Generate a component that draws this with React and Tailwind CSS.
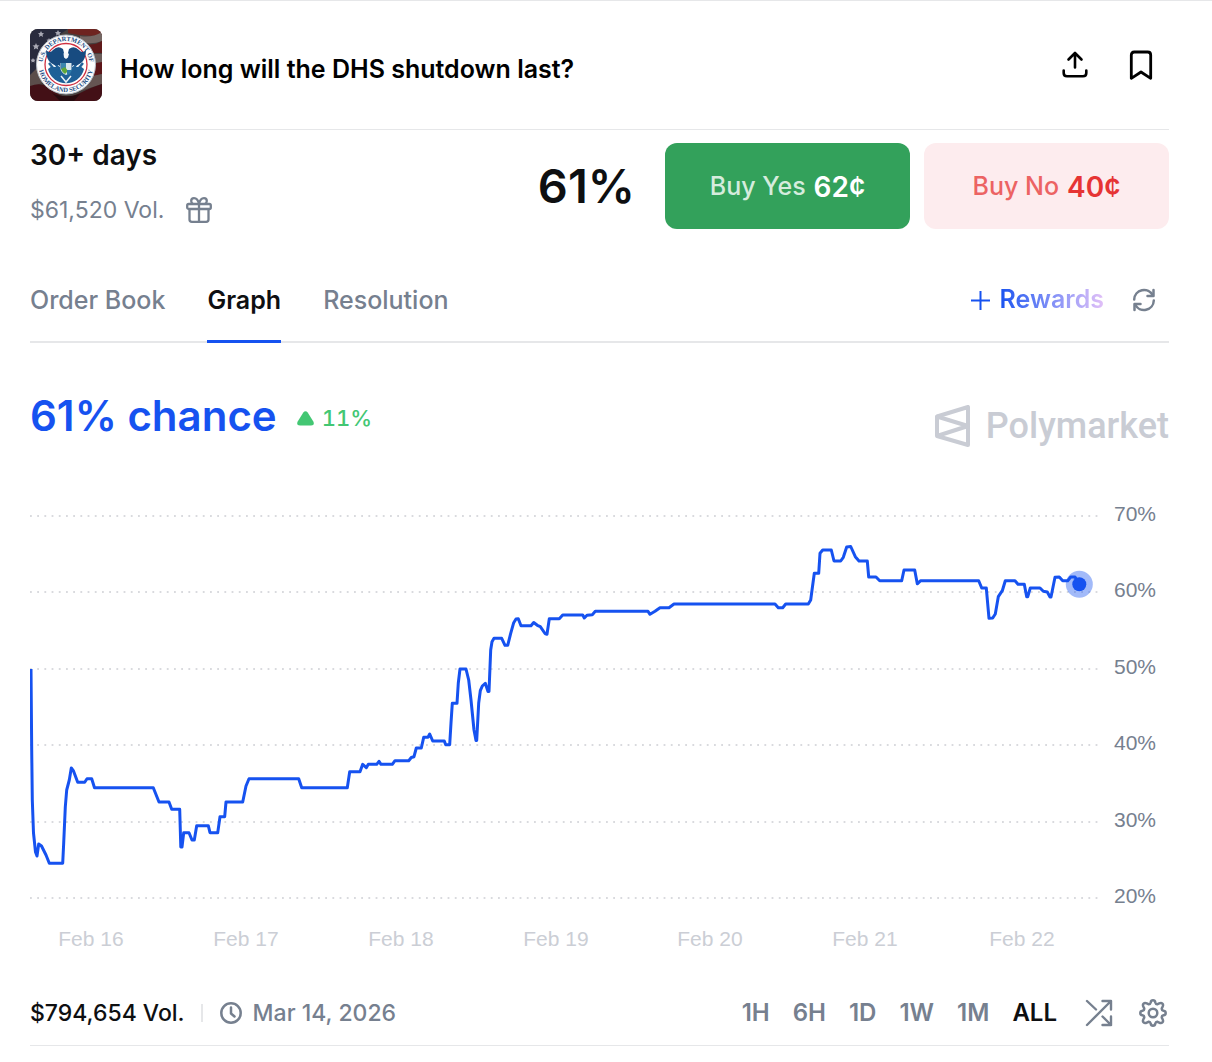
import { useState } from 'react';

const TABS = ['Order Book', 'Graph', 'Resolution'];
const RANGES = ['1H', '6H', '1D', '1W', '1M', 'ALL'];

// Grid rows of the price chart, top to bottom.
const GRID = [
  { label: '70%', y: 516 },
  { label: '60%', y: 592 },
  { label: '50%', y: 669 },
  { label: '40%', y: 745 },
  { label: '30%', y: 822 },
  { label: '20%', y: 898 },
];

const DATES = [
  { label: 'Feb 16', x: 91 },
  { label: 'Feb 17', x: 246 },
  { label: 'Feb 18', x: 401 },
  { label: 'Feb 19', x: 556 },
  { label: 'Feb 20', x: 710 },
  { label: 'Feb 21', x: 865 },
  { label: 'Feb 22', x: 1022 },
];

const PRICE_LINE = `
  31,669 31.7,750 32.3,800 33.5,833 35.5,852 37,856 38.7,844 41.5,846 46,855 49.3,863.3 62.7,863.3
  63.7,843 65.3,807 66.7,790 69.3,780 71.3,768 73.5,771 77.7,782.3 84.7,782.3 87,778.7 91.7,778.7
  94.5,787.7 153.3,787.7 159,802 169,802 171.7,809.3 179.7,809.3 180.8,847 182,847 183.7,832.7
  189,832.7 192,840 194.3,840 196.7,825.7 208.3,825.7 210,832.7 217.7,832.7 220,816.7 224.7,816.7
  226,802 242.7,802 246,786 249,778.7 298.7,778.7 301.7,787.7 347.3,787.7 349.7,771.7 360,771.7
  362.7,764.3 366.3,767.7 368.3,764.3 376.7,764.3 379,761.3 381,764.3 392.3,764.3 395,760.7
  408.7,760.7 411.3,757.5 414,756.7 416.3,748 421.3,748 423.7,737.3 428,737.3 429.7,734 432.7,741
  444.3,741 445.7,744.7 449.7,744.7 451,723 452.3,703.3 457,703.3 458.3,683 460,669 466,669
  468.7,680 471,700 474,730 476,740.5 476.7,740.5 478.7,703 480.3,690.7 482.3,686 485.3,683.3
  488,691.5 489,691.5 490.7,650 492,641.7 494,638.3 501.7,638.3 505,645.3 507.7,645.3 510.7,633.3
  513.7,622.7 516,619 518.3,618.7 521,625.7 531,625.7 533.7,622.5 537.3,625.3 540.3,626.7 545,633.5
  547,634.3 549.3,618.7 559.3,618.7 562.7,615 582.7,615 584.3,618 587,615.3 592.3,614.7 595.3,611.3
  648,611.3 650,614.3 655,611.3 660,607.7 669,607.7 674,604 775,604 778.3,607.7 782.7,607.7
  785.7,604 808.3,604 810.7,600 812.3,588 814.3,573.3 818.7,573.3 820,553.3 822.7,550 831.3,550
  834,561 840.7,561 843.3,557.3 846.7,547 850.7,546.5 855.3,556.7 859,561 867.3,561 868.7,577
  876,577 879.7,580.7 901.7,580.7 904,570 914.7,570 917.3,583.8 920.7,580.7 978.7,580.7 981.7,588
  986.3,588 989,618.3 992.7,618 995.3,614 998.3,596.7 1002.3,590.7 1005.3,580.7 1015,580.7
  1018,584.3 1024.3,584.3 1026.7,596.7 1027.7,596.7 1030.3,588 1040,588 1043.3,591.3 1047.3,592
  1050,597 1051,597 1055,577.3 1059.3,577 1062.7,580.7 1067.7,580.7 1070.7,577 1075,577 1079.3,584.3
`;

function SealAvatar() {
  return (
    <svg viewBox="0 0 72 72" className="size-[72px] shrink-0 rounded-lg" role="img" aria-label="Department of Homeland Security">
      <defs>
        <path id="seal-top" d="M13.300 41.600A23.500 23.500 0 1 1 58.700 41.600" />
        <path id="seal-bottom" d="M8.400 35.500A27.600 27.600 0 0 0 63.600 35.500" />
      </defs>
      <rect width="72" height="72" fill="#46403f" />
      <path d="M38 0H72V6Q54 8 38 4Z" fill="#6e2420" />
      <path d="M50 7Q62 9 72 3V12Q62 16 50 13Z" fill="#756763" />
      <path d="M54 15Q64 17 72 12V24H58Z" fill="#5f1a1a" />
      <path d="M60 25H72V34H62Z" fill="#6b5d5a" />
      <path d="M60 35L72 33V45L60 48Z" fill="#5c1518" />
      <path d="M58 48L72 45V55L50 62Z" fill="#655552" />
      <path d="M0 0H38Q24 8 14 24L6 46H0Z" fill="#292b3d" />
      <path d="M0 46L8 38 12 54 0 58Z" fill="#5b4d4a" />
      <path d="M0 57Q14 52 24 62T50 64Q62 58 72 55V72H0Z" fill="#431016" />
      <path d="M22 64Q34 70 50 65L44 72H30Z" fill="#260b0f" />
      <g fill="#a9a9b4">
        <path d="M11 2l1 2 2 .2-1.500 1.500.5 2.200-2-1.200-2 1.200.5-2.200L8 4.200l2-.2z" />
        <path d="M28 1l1 2 2 .2-1.500 1.500.5 2-2-1.200-2 1.200.5-2L25 3.200l2-.2z" />
        <path d="M6 14l1 2.200 2.500.2-1.800 1.600.5 2.500L6 19.200l-2.200 1.300.5-2.500-1.800-1.600 2.500-.2z" />
        <path d="M19 9l.8 1.500 1.700.2-1.200 1.200.3 1.700-1.600-.8-1.600.8.3-1.700-1.200-1.200 1.700-.2z" />
        <path d="M3 29l.8 1.500 1.700.2-1.200 1.200.3 1.700L3 32.800l-1.600.8.3-1.700L.5 30.700l1.700-.2z" />
      </g>
      <circle cx="36" cy="35.500" r="29.500" fill="#fdfdfd" stroke="#b8bfc8" strokeWidth="1" />
      <g fill="#1d4f86" fontFamily="Liberation Serif, serif" fontWeight="700" fontSize="6.500">
        <text textAnchor="middle">
          <textPath href="#seal-top" startOffset="50%">U.S. DEPARTMENT OF</textPath>
        </text>
        <text textAnchor="middle">
          <textPath href="#seal-bottom" startOffset="50%">HOMELAND SECURITY</textPath>
        </text>
      </g>
      <circle cx="36" cy="35.500" r="21" fill="#fff" stroke="#cf3040" strokeWidth="1.300" />
      <path d="M18 40A18.500 18.500 0 0 0 54 40L45 33H27Z" fill="#1f6097" />
      <path d="M22 29L50 29 53 38 19 38Z" fill="#eef4f8" />
      <path d="M19 34l9 11M22 31l9 11M53 34l-9 11M50 31l-9 11" stroke="#1f6097" strokeWidth="2.400" />
      <path
        d="M16 21Q20 25 23 21Q28 16 33 20L34 24H38L39 20Q44 16 49 21Q52 25 56 21Q56 30 51 34Q47 37 43 36L40 42H32L29 36Q25 37 21 34Q16 30 16 21Z"
        fill="#174b80"
      />
      <path d="M33.500 24.500Q36 22 39 25L38 28.500 36 30 34 28.500Z" fill="#f4f7f9" />
      <path d="M30.500 34h11v6q-1 4-5.500 6-4.500-2-5.500-6z" fill="#d9e8ee" />
      <path d="M31 34h5v6h-5z" fill="#3b86ae" />
      <path d="M31 40l4-2 3 4-3 3q-3-2-4-5z" fill="#5fa63a" />
      <path d="M37 41h5l-2 4-3 1z" fill="#2d79a8" />
      <path d="M31 47l5 6 5-6" fill="none" stroke="#e9f2f7" strokeWidth="1.500" />
    </svg>
  );
}

function UploadIcon() {
  return (
    <svg viewBox="0 0 30 30" className="size-[30px]" fill="none" stroke="#000" strokeWidth="2.600" strokeLinecap="round" strokeLinejoin="round">
      <path d="M15 17.500V3M8.500 9.500L15 3L21.500 9.500" />
      <path d="M3.700 20.500V23Q3.700 26.300 7 26.300H23Q26.300 26.300 26.300 23V20.500" />
    </svg>
  );
}

function BookmarkIcon() {
  return (
    <svg viewBox="0 0 30 30" className="size-[30px]" fill="none" stroke="#000" strokeWidth="2.800" strokeLinejoin="round">
      <path d="M5.300 28.300V5Q5.300 2 8.300 2H21.700Q24.700 2 24.700 5V28.300L15 22Z" />
    </svg>
  );
}

function GiftIcon() {
  return (
    <svg viewBox="0 0 26 26" className="size-[26px]" fill="none" stroke="currentColor" strokeWidth="2.300" strokeLinejoin="round">
      <rect x="1.200" y="7" width="23.600" height="5" rx="1.500" />
      <path d="M3.500 12V22.500Q3.500 24.800 5.800 24.800H20.200Q22.500 24.800 22.500 22.500V12M13 7V24.800" />
      <path d="M13 7Q11.800 1.200 8 1.200Q5.200 1.200 5.200 4Q5.200 6 7 7M13 7Q14.200 1.200 18 1.200Q20.800 1.200 20.800 4Q20.800 6 19 7" />
    </svg>
  );
}

function RefreshIcon() {
  return (
    <svg viewBox="0 0 24 24" className="size-6" fill="none" stroke="currentColor" strokeWidth="2.500" strokeLinecap="round" strokeLinejoin="round">
      <path d="M2.200 11.500A9.800 9.800 0 0 1 20.800 7.500M21.800 12.500A9.800 9.800 0 0 1 3.200 16.500" />
      <path d="M21.500 2V8H15.500M2.500 22V16H8.500" />
    </svg>
  );
}

function PolymarketMark() {
  return (
    <svg viewBox="0 0 36 42" className="h-[42px] w-9" fill="none" stroke="currentColor" strokeWidth="4" strokeLinejoin="round">
      <path d="M3 11.500L34 2V40L3 31Z" />
      <path d="M3 11.500L34 21L3 31" />
    </svg>
  );
}

function ClockIcon() {
  return (
    <svg viewBox="0 0 24 24" className="size-6" fill="none" stroke="currentColor" strokeWidth="2.500" strokeLinecap="round" strokeLinejoin="round">
      <circle cx="12" cy="12" r="9.700" />
      <path d="M12 6.500V12.500L15.500 15.500" />
    </svg>
  );
}

function ShuffleIcon() {
  return (
    <svg viewBox="0 0 28 28" className="size-7" fill="none" stroke="currentColor" strokeWidth="2.400" strokeLinecap="round" strokeLinejoin="round">
      <path d="M2 26L26 2M17.500 2H26V10.500M2 2L11 10.500M17.500 17.500L26 26M26 17.500V26H17.500" />
    </svg>
  );
}

function GearIcon() {
  return (
    <svg viewBox="0 0 28 28" className="size-7" fill="none" stroke="currentColor" strokeWidth="2.500" strokeLinejoin="round">
      <circle cx="14" cy="14" r="4.300" />
      <path d="M11.700 3.500Q12 1.300 14 1.300T16.300 3.500Q16.800 5.500 18.600 5.200L20.200 4.400Q22.200 3.400 23.400 4.600T23.600 7.800L22.800 9.400Q22.500 11.200 24.500 11.700Q26.700 12 26.700 14T24.500 16.300Q22.500 16.800 22.800 18.600L23.600 20.200Q24.600 22.200 23.400 23.400T20.200 23.600L18.600 22.800Q16.800 22.500 16.300 24.500Q16 26.700 14 26.700T11.700 24.500Q11.200 22.500 9.400 22.800L7.800 23.600Q5.800 24.600 4.600 23.400T4.400 20.200L5.200 18.600Q5.500 16.800 3.500 16.300Q1.300 16 1.300 14T3.500 11.700Q5.500 11.200 5.200 9.400L4.400 7.800Q3.400 5.800 4.600 4.600T7.800 4.400L9.400 5.200Q11.200 5.500 11.700 3.500Z" />
    </svg>
  );
}

function PriceChart() {
  return (
    <svg viewBox="30 490 1139 470" className="block h-auto w-full" role="img" aria-label="Chance over time">
      {GRID.map((row) => (
        <g key={row.label}>
          <line x1="30" x2="1098" y1={row.y} y2={row.y} stroke="#d9dade" strokeWidth="1.800" strokeDasharray="1.800 5.400" />
          <text x="1114" y={row.y + 5} fill="#76808f" fontFamily="Liberation Sans, Arial, sans-serif" fontSize="21">
            {row.label}
          </text>
        </g>
      ))}
      {DATES.map((d) => (
        <text
          key={d.label}
          x={d.x}
          y="946"
          textAnchor="middle"
          fill="#cbced5"
          fontFamily="Liberation Sans, Arial, sans-serif"
          fontSize="21"
        >
          {d.label}
        </text>
      ))}
      <polyline points={PRICE_LINE} fill="none" stroke="#1652f0" strokeWidth="3" strokeLinejoin="round" strokeLinecap="butt" />
      <circle cx="1079.300" cy="584.300" r="13.500" fill="#1652f0" fillOpacity="0.4" />
      <circle cx="1079.300" cy="584.300" r="7" fill="#1652f0" />
    </svg>
  );
}

export default function App() {
  const [tab, setTab] = useState('Graph');
  const [range, setRange] = useState('ALL');

  return (
    <main className="border-t border-[#e6e7e9] bg-white pr-[43px] pl-[30px] font-['Inter',sans-serif] text-[#0e0f11]">
      {/* Market header */}
      <header className="flex h-[129px] items-center gap-[18px] border-b border-[#e6e7e9]">
        <SealAvatar />
        <h1 className="flex-1 pt-2 text-[25px] leading-8 font-semibold text-black">How long will the DHS shutdown last?</h1>
        <div className="flex items-center gap-9 pr-[13px]">
          <button type="button" aria-label="Share"><UploadIcon /></button>
          <button type="button" aria-label="Bookmark"><BookmarkIcon /></button>
        </div>
      </header>

      {/* Outcome row */}
      <section className="flex pt-[13px]">
        <div className="flex-1">
          <h2 className="text-[28px] leading-6 font-semibold">30+ days</h2>
          <div className="mt-[27px] flex items-center gap-[22px] text-[#76808f]">
            <span className="text-[23px] leading-8">$61,520 Vol.</span>
            <button type="button" aria-label="Rewards available"><GiftIcon /></button>
          </div>
        </div>
        <div className="flex items-center">
          <span className="mr-[30px] text-[47px] leading-[60px] font-semibold">61%</span>
          <button
            type="button"
            className="mr-[14px] flex h-[86px] w-[245px] items-center justify-center gap-2 rounded-xl bg-[#33a15b] pt-[2px] font-semibold text-white"
          >
            <span className="text-[25px] font-medium text-[#d5ecdd]">Buy Yes</span>
            <span className="text-[28px]">62¢</span>
          </button>
          <button
            type="button"
            className="flex h-[86px] w-[245px] items-center justify-center gap-2 rounded-xl bg-[#fdecee] pt-[2px] font-semibold text-[#e63434]"
          >
            <span className="text-[25px] font-medium text-[#ec6363]">Buy No</span>
            <span className="text-[28px]">40¢</span>
          </button>
        </div>
      </section>

      {/* Tabs */}
      <nav className="mt-7 flex h-[86px] items-stretch justify-between border-b-2 border-[#e6e7e9]">
        <div className="flex gap-[42px]">
          {TABS.map((name) => (
            <button
              key={name}
              type="button"
              onClick={() => setTab(name)}
              className={
                name === tab
                  ? '-mb-[2px] border-b-3 border-[#1652f0] pt-1 text-[25px] font-semibold'
                  : 'pt-1 text-[25px] font-medium text-[#76808f]'
              }
            >
              {name}
            </button>
          ))}
        </div>
        <div className="flex items-center gap-[28px] pt-[2px] pr-[13px]">
          <button type="button" className="flex items-center gap-[10px] text-[25px] font-semibold">
            <svg viewBox="0 0 19 19" className="size-[19px]" stroke="#1652f0" strokeWidth="2">
              <path d="M9.500 0V19M0 9.500H19" />
            </svg>
            <span className="bg-linear-to-r from-[#1652f0] to-[#e2c0f7] bg-clip-text text-transparent">Rewards</span>
          </button>
          <button type="button" aria-label="Refresh" className="text-[#76808f]"><RefreshIcon /></button>
        </div>
      </nav>

      {/* Chance + watermark */}
      <section className="flex h-[147px] items-start justify-between pt-[47px]">
        <div className="flex items-center gap-5">
          <span className="text-[42px] leading-[52px] font-semibold text-[#1652f0]">61% chance</span>
          <span className="flex items-center gap-2 pt-1 text-[22px] font-medium text-[#43c773] tabular-nums">
            <svg viewBox="0 0 17 15" className="h-[15px] w-[17px]" fill="currentColor">
              <path d="M6.300 1.500Q8.500-1 10.700 1.500L16.300 10.500Q18 14.500 14 14.500H3Q-1 14.500.7 10.500Z" />
            </svg>
            11%
          </span>
        </div>
        <div className="mt-[15px] flex items-center gap-4 text-[#c9ccd4]">
          <PolymarketMark />
          <span className="font-['Roboto',sans-serif] text-[36px] leading-[42px] font-medium">Polymarket</span>
        </div>
      </section>

      <PriceChart />

      {/* Footer */}
      <footer className="mt-5 flex h-[66px] items-center justify-between border-b border-[#e6e7e9] pt-px">
        <div className="flex items-center text-[23px] font-medium">
          <span>$794,654 Vol.</span>
          <span className="mx-4 h-[18px] w-[2px] bg-[#e6e7e9]" />
          <span className="flex items-center gap-[10px] text-[#76808f]">
            <ClockIcon />
            Mar 14, 2026
          </span>
        </div>
        <div className="flex items-center pr-[2px] text-[#76808f]">
          <div className="flex gap-[23px] text-[24px] font-semibold">
            {RANGES.map((r) => (
              <button key={r} type="button" onClick={() => setRange(r)} className={r === range ? 'text-[#0e0f11]' : ''}>
                {r}
              </button>
            ))}
          </div>
          <button type="button" aria-label="Compare markets" className="ml-7"><ShuffleIcon /></button>
          <button type="button" aria-label="Chart settings" className="ml-[26px]"><GearIcon /></button>
        </div>
      </footer>
    </main>
  );
}
